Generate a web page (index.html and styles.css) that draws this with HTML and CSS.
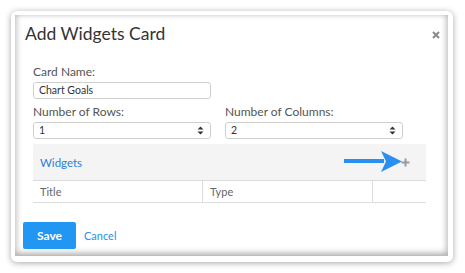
FILE: index.html
```html
<!DOCTYPE html>
<html lang="en">
  <head>
    <meta charset="UTF-8" />
    <title>Add Widgets Card</title>
    <link rel="stylesheet" href="styles.css">
  </head>
  <body>
    <div class="frame">
      <div class="modal">
        <div class="modal-header">
          <h1 class="modal-title">Add Widgets Card</h1>
          <svg class="close-icon" width="8" height="8" viewBox="0 0 8 8">
            <path d="M1 1 L7 7 M7 1 L1 7" stroke="#8a8a8a" stroke-width="2" />
          </svg>
        </div>

        <div class="modal-body">
          <label class="field-label">Card Name:</label>
          <div class="text-input half">Chart Goals</div>

          <div class="row">
            <div class="col">
              <label class="field-label">Number of Rows:</label>
              <div class="text-input select">
                <span>1</span>
                <svg class="spinner" width="7" height="9" viewBox="0 0 7 9">
                  <path d="M0.5 3.5 L3.5 0.5 L6.5 3.5 Z M0.5 5.5 L3.5 8.5 L6.5 5.5 Z" fill="#333" />
                </svg>
              </div>
            </div>
            <div class="col">
              <label class="field-label">Number of Columns:</label>
              <div class="text-input select">
                <span>2</span>
                <svg class="spinner" width="7" height="9" viewBox="0 0 7 9">
                  <path d="M0.5 3.5 L3.5 0.5 L6.5 3.5 Z M0.5 5.5 L3.5 8.5 L6.5 5.5 Z" fill="#333" />
                </svg>
              </div>
            </div>
          </div>

          <div class="widgets-panel">
            <div class="widgets-head">
              <a class="widgets-link">Widgets</a>
              <svg class="plus-icon" width="9" height="9" viewBox="0 0 9 9">
                <path d="M4.5 0.5 V8.5 M0.5 4.5 H8.5" stroke="#9a9a9a" stroke-width="2" />
              </svg>
              <svg class="arrow" width="60" height="24" viewBox="0 0 60 24">
                <path d="M0 11 H40" stroke="#2a8ff0" stroke-width="4" />
                <path d="M37 1 L58 11.5 L37 22 L42 11.5 Z" fill="#2a8ff0" />
              </svg>
            </div>
            <div class="widgets-table">
              <div class="cell">Title</div>
              <div class="cell">Type</div>
              <div class="cell"></div>
            </div>
          </div>
        </div>

        <div class="modal-footer">
          <button class="save-btn">Save</button>
          <a class="cancel-link">Cancel</a>
        </div>
      </div>
    </div>
  </body>
</html>
```

FILE: styles.css
```css
body {
  margin: 0;
  padding: 11px;
  background: #ffffff;
  font-family: Lato, "Open Sans", sans-serif;
  color: #444;
}

.frame {
  width: 442px;
  height: 251px;
  box-sizing: border-box;
  padding: 4px 5px 6px 4px;
  background: #ffffff;
  border-radius: 6px;
  box-shadow: 0 1px 6px rgba(0, 0, 0, 0.35);
}

.modal {
  height: 100%;
  box-sizing: border-box;
  background: #ffffff;
  box-shadow: inset 0 -3px 6px rgba(0, 0, 0, 0.18), inset 3px 0 5px rgba(0, 0, 0, 0.1),
    inset -3px 0 5px rgba(0, 0, 0, 0.12);
  border-bottom: 1px solid #bdbdbd;
}

.modal-header {
  display: flex;
  justify-content: space-between;
  align-items: flex-start;
  padding: 7px 8px 0 10px;
}

.modal-title {
  margin: 0;
  font-size: 17.5px;
  font-weight: 400;
  color: #333;
  line-height: 24px;
}

.close-icon {
  margin-top: 9px;
}

.modal-body {
  padding: 19px 22px 0 18px;
}

.field-label {
  display: block;
  font-size: 12px;
  color: #555;
  line-height: 14px;
  margin-bottom: 3px;
}

.text-input {
  box-sizing: border-box;
  height: 17px;
  border: 1px solid #cfcfcf;
  border-radius: 3px;
  font-size: 10.5px;
  color: #333;
  line-height: 15px;
  padding: 0 6px 0 5px;
}

.half {
  width: 178px;
}

.select {
  display: flex;
  justify-content: space-between;
  align-items: center;
}

.row {
  display: flex;
  gap: 14px;
  margin-top: 6px;
}

.col {
  width: 178px;
}

.widgets-panel {
  margin-top: 5px;
  width: 393px;
}

.widgets-head {
  position: relative;
  display: flex;
  justify-content: space-between;
  align-items: center;
  height: 36px;
  padding: 0 16px 0 7px;
  background: #f4f4f4;
  border-bottom: 1px solid #dcdcdc;
}

.widgets-link {
  font-size: 11.5px;
  color: #2a7fd4;
}

.arrow {
  position: absolute;
  left: 311px;
  top: 6px;
}

.widgets-table {
  display: grid;
  grid-template-columns: 169px 170px 1fr;
  height: 21px;
  border-bottom: 1px solid #dcdcdc;
}

.cell {
  font-size: 11px;
  color: #666;
  line-height: 21px;
  padding-left: 7px;
}

.cell + .cell {
  border-left: 1px solid #dcdcdc;
}

.modal-footer {
  display: flex;
  align-items: center;
  gap: 8px;
  padding: 19px 0 0 8px;
}

.save-btn {
  width: 53px;
  height: 27px;
  border: none;
  border-radius: 2px;
  background: #2196f3;
  color: #ffffff;
  font-family: Lato, "Open Sans", sans-serif;
  font-size: 12px;
  font-weight: 700;
}

.cancel-link {
  font-size: 11px;
  color: #2a8fe8;
}
```
